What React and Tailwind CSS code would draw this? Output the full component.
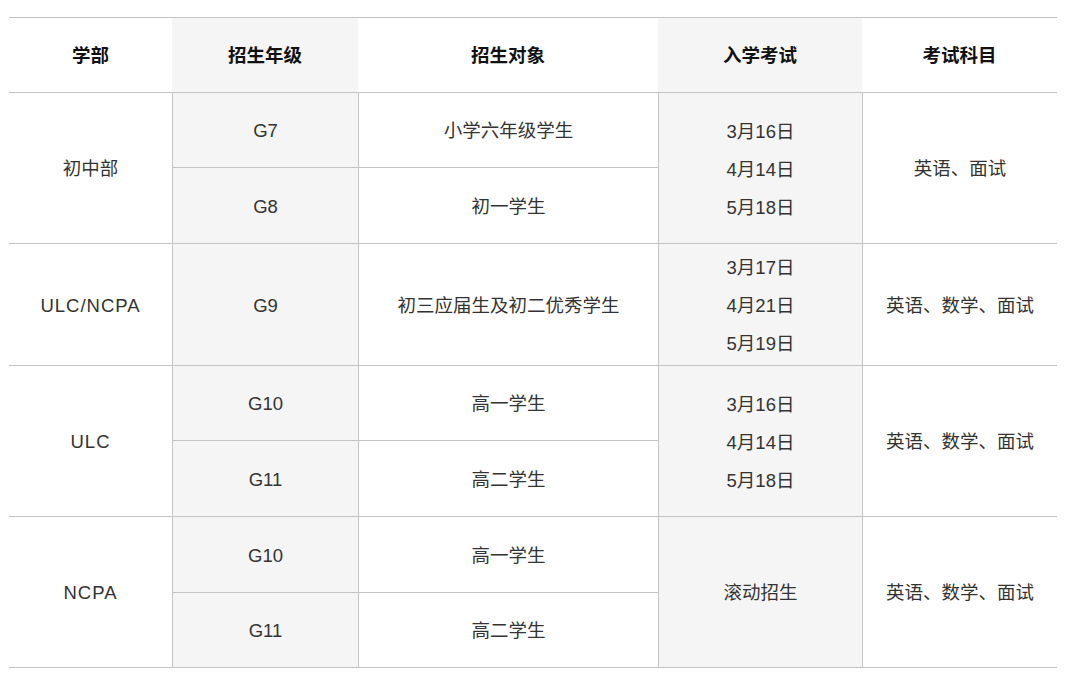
const line = 'border-[#c4c4c4]'

function Cell({ children, gray, left = true, className = '' }) {
  return (
    <div
      className={`flex flex-col items-center justify-center pt-[2px] border-b ${line} ${left ? 'border-l' : ''} ${gray ? 'bg-[#f5f5f5]' : 'bg-white'} ${className}`}
    >
      {children}
    </div>
  )
}

function Dates({ items }) {
  return (
    <div className="flex flex-col items-center gap-[11px]">
      {items.map((d) => (
        <span key={d} className="leading-[27px]">{d}</span>
      ))}
    </div>
  )
}

// Latin department names sit a little wider in the reference font
const Dept = ({ children }) => <span className="tracking-[1px]">{children}</span>

export default function App() {
  const headers = ['学部', '招生年级', '招生对象', '入学考试', '考试科目']
  return (
    <div
      className="w-[1080px] h-[678px] bg-white pt-[17px] pl-[9px] text-[18.5px] text-[#333]"
      style={{ fontFamily: '"Liberation Sans", "Noto Sans CJK SC", sans-serif' }}
    >
      <div
        className={`grid w-[1048px] border-t ${line} grid-cols-[163px_186px_300px_204px_195px] grid-rows-[75px_75px_76px_122px_75px_76px_76px_75px]`}
      >
        {headers.map((h, i) => (
          <div
            key={h}
            className={`flex items-center justify-center pt-[2px] border-b ${line} font-bold text-[#111] ${i === 1 || i === 3 ? 'bg-[#f5f5f5]' : 'bg-white'}`}
          >
            {h}
          </div>
        ))}

        {/* 初中部 */}
        <Cell left={false} className="row-span-2">初中部</Cell>
        <Cell gray>G7</Cell>
        <Cell>小学六年级学生</Cell>
        <Cell gray className="row-span-2"><Dates items={['3月16日', '4月14日', '5月18日']} /></Cell>
        <Cell className="row-span-2">英语、面试</Cell>
        <Cell gray>G8</Cell>
        <Cell>初一学生</Cell>

        {/* ULC/NCPA */}
        <Cell left={false}><Dept>ULC/NCPA</Dept></Cell>
        <Cell gray>G9</Cell>
        <Cell>初三应届生及初二优秀学生</Cell>
        <Cell gray><Dates items={['3月17日', '4月21日', '5月19日']} /></Cell>
        <Cell>英语、数学、面试</Cell>

        {/* ULC */}
        <Cell left={false} className="row-span-2"><Dept>ULC</Dept></Cell>
        <Cell gray>G10</Cell>
        <Cell>高一学生</Cell>
        <Cell gray className="row-span-2"><Dates items={['3月16日', '4月14日', '5月18日']} /></Cell>
        <Cell className="row-span-2">英语、数学、面试</Cell>
        <Cell gray>G11</Cell>
        <Cell>高二学生</Cell>

        {/* NCPA */}
        <Cell left={false} className="row-span-2"><Dept>NCPA</Dept></Cell>
        <Cell gray>G10</Cell>
        <Cell>高一学生</Cell>
        <Cell gray className="row-span-2">滚动招生</Cell>
        <Cell className="row-span-2">英语、数学、面试</Cell>
        <Cell gray>G11</Cell>
        <Cell>高二学生</Cell>
      </div>
    </div>
  )
}
